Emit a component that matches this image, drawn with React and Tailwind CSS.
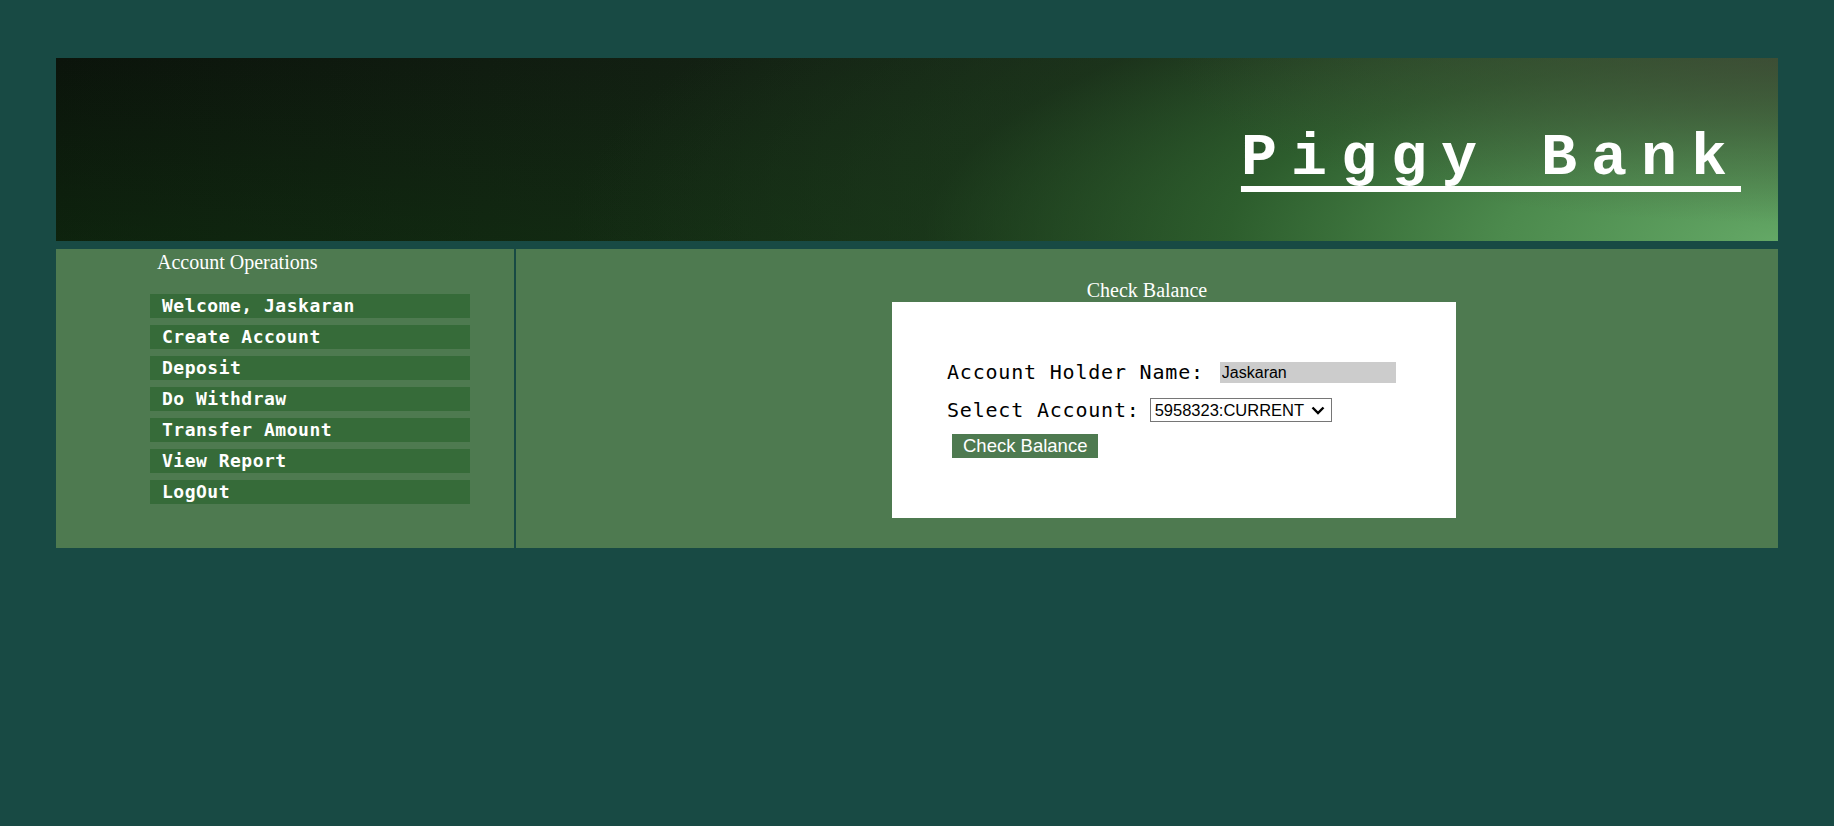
import { useState } from 'react';

const menu = [
  'Welcome, Jaskaran',
  'Create Account',
  'Deposit',
  'Do Withdraw',
  'Transfer Amount',
  'View Report',
  'LogOut'
];

export default function App() {
  const [account, setAccount] = useState('5958323:CURRENT');

  return (
    <div className="min-h-screen bg-[#184a44] pt-[58px] px-[56px]">
      <header className="h-[183px] bg-[radial-gradient(ellipse_35%_90%_at_100%_0%,rgba(66,72,56,0.7)_0%,rgba(66,72,56,0)_100%),radial-gradient(ellipse_80%_250%_at_100%_100%,#64a866_0%,#4c8a4d_20%,rgba(47,98,47,0.9)_40%,rgba(30,62,30,0.5)_62%,rgba(20,40,20,0)_88%),linear-gradient(to_bottom,rgba(0,0,0,0)_0%,rgba(20,70,20,0.3)_100%),linear-gradient(to_right,#0b140b_0%,#152415_50%,#283424_100%)] flex justify-end pt-[66px] pr-[37px]">
        <h1 className="font-['Liberation_Mono',monospace] font-bold text-white text-[60px] leading-[68px] tracking-[14px] underline decoration-[6px] underline-offset-[12px] [text-decoration-skip-ink:none] h-fit">
          Piggy Bank
        </h1>
      </header>

      <div className="flex mt-[8px]">
        <aside className="w-[460px] shrink-0 bg-[#4e7a50] border-r-2 border-[#184a44] pt-[2px] pb-[44px]">
          <h2 className="pl-[101px] font-['Liberation_Serif',serif] text-white text-[20px] leading-[22px]">
            Account Operations
          </h2>
          <ul className="mt-[21px] ml-[94px] w-[320px] flex flex-col gap-[7px]">
            {menu.map((item) => (
              <li
                key={item}
                className="h-[24px] bg-[#366b39] pl-[12px] font-['DejaVu_Sans_Mono',monospace] font-bold text-white text-[18px] leading-[24px] tracking-[0.5px] cursor-pointer"
              >
                {item}
              </li>
            ))}
          </ul>
        </aside>

        <main className="flex-1 bg-[#4e7a50] pt-[30px]">
          <h3 className="text-center font-['Liberation_Serif',serif] text-white text-[20px] leading-[22px]">
            Check Balance
          </h3>
          <div className="ml-[376px] mt-[1px] w-[564px] bg-white pt-[58px] pb-[60px] pl-[55px]">
            <div className="flex items-center h-[24px]">
              <span className="font-['DejaVu_Sans_Mono',monospace] text-black text-[20px] leading-[24px] tracking-[0.8px]">
                Account Holder Name:
              </span>
              <input
                readOnly
                value="Jaskaran"
                className="ml-[16px] w-[176px] h-[21px] bg-[#cccccc] pl-[2px] pt-[2px] font-['Liberation_Sans',sans-serif] text-[16px] text-black outline-none"
              />
            </div>
            <div className="flex items-center h-[24px] mt-[14px]">
              <span className="font-['DejaVu_Sans_Mono',monospace] text-black text-[20px] leading-[24px] tracking-[0.8px]">
                Select Account:
              </span>
              <div className="relative ml-[10px]">
                <select
                  value={account}
                  onChange={(e) => setAccount(e.target.value)}
                  className="appearance-none w-[182px] h-[24px] border border-[#767676] bg-white pl-[4px] font-['Liberation_Sans',sans-serif] text-[16.5px] leading-[22px] text-black outline-none"
                >
                  <option value="5958323:CURRENT">5958323:CURRENT</option>
                </select>
                <svg
                  className="absolute right-[7px] top-[8px] pointer-events-none"
                  width="14"
                  height="9"
                  viewBox="0 0 14 9"
                >
                  <polyline points="1.5,1.5 7,7 12.5,1.5" fill="none" stroke="#000" strokeWidth="2.4" />
                </svg>
              </div>
            </div>
            <button
              type="button"
              className="mt-[12px] ml-[5px] h-[24px] px-[11px] bg-[#4e7a50] text-white font-['Liberation_Sans',sans-serif] text-[18.5px] leading-[24px]"
            >
              Check Balance
            </button>
          </div>
        </main>
      </div>
    </div>
  );
}
